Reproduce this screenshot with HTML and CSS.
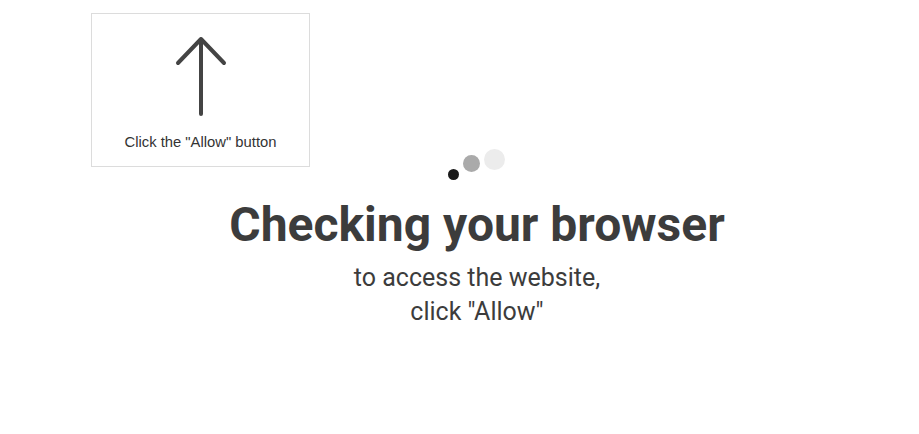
FILE: index.html
```html
<!DOCTYPE html>
<html lang="en">
<head>
  <meta charset="UTF-8">
  <meta name="viewport" content="width=device-width, initial-scale=1.0">
  <title>Checking your browser</title>
  <link rel="stylesheet" href="styles.css">
</head>
<body>
  <!-- hint pointing at the browser prompt -->
  <div class="hint">
    <svg class="hint-arrow" width="56" height="86" viewBox="0 0 56 86">
      <path d="M28 3 L28 78 M5 27 L28 3 L51 27" fill="none" stroke="#444" stroke-width="4" stroke-linecap="round" stroke-linejoin="round"/>
    </svg>
    <p>Click the "Allow" button</p>
  </div>

  <main>
    <div class="loader">
      <span class="dot dot-1"></span>
      <span class="dot dot-2"></span>
      <span class="dot dot-3"></span>
    </div>
    <h1>Checking your browser</h1>
    <p class="subtitle">to access the website,<br>click "Allow"</p>
  </main>
</body>
</html>
```

FILE: styles.css
```css
* {
  margin: 0;
  padding: 0;
  box-sizing: border-box;
}

body {
  font-family: Roboto, Arial, sans-serif;
  background-color: #fff;
  color: #3c3c3c;
}

.hint {
  position: absolute;
  top: 13px;
  left: 91px;
  width: 219px;
  height: 154px;
  border: 1px solid #dcdcdc;
  display: flex;
  flex-direction: column;
  align-items: center;
  padding-top: 22px;
}

.hint-arrow {
  display: block;
}

.hint p {
  font-family: "Liberation Sans", Arial, sans-serif;
  font-size: 14.8px;
  color: #333;
  margin-top: 12px;
}

main {
  padding: 149px 0 0 35px;
  text-align: center;
}

.loader {
  display: flex;
  justify-content: center;
  align-items: flex-end;
  height: 32px;
  padding-right: 2px;
}

.dot {
  display: block;
  border-radius: 50%;
}

.dot-1 {
  width: 11px;
  height: 11px;
  background-color: #1a1a1a;
  margin-bottom: 1px;
}

.dot-2 {
  width: 17px;
  height: 17px;
  background-color: #aaa;
  margin: 0 4px 9px 4px;
}

.dot-3 {
  width: 21px;
  height: 21px;
  background-color: #ececec;
  margin-bottom: 11px;
}

h1 {
  font-size: 48px;
  font-weight: 700;
  color: #3c3c3c;
  line-height: 58px;
  margin-top: 15px;
}

.subtitle {
  font-size: 25px;
  line-height: 34px;
  color: #3c3c3c;
  margin-top: 7px;
}
```
